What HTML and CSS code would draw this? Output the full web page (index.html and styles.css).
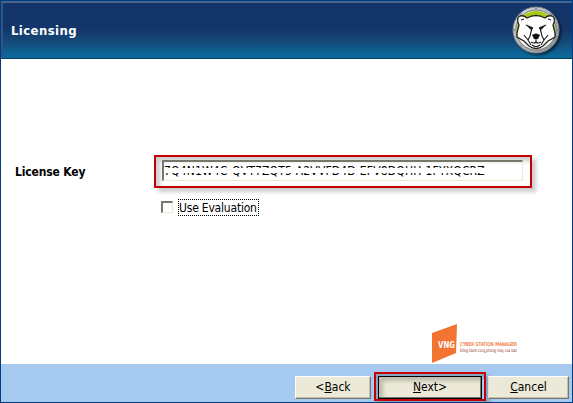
FILE: index.html
```html
<!DOCTYPE html>
<html lang="en">
<head>
<meta charset="utf-8">
<title>Licensing</title>
<link rel="stylesheet" href="styles.css">
</head>
<body>
<div class="window">
  <header class="header">
    <h1 class="title">Licensing</h1>
    <svg class="bear" width="50" height="50" viewBox="0 0 50 50">
      <defs><linearGradient id="ring" x1="0" y1="0" x2="1" y2="1"><stop offset="0" stop-color="#e0e1e4"/><stop offset=".5" stop-color="#b3b5b9"/><stop offset="1" stop-color="#85898e"/></linearGradient></defs>
      <circle cx="25" cy="24" r="23" fill="url(#ring)" stroke="#858b93"/>
      <circle cx="25" cy="24" r="20" fill="#eceeed" stroke="#777c70"/>
      <path d="M6 29A19.500 19.500 0 1 1 44 29Z" fill="#a9c916"/>
      <path d="M9 10C6 11 6 16 8 19L6 27V31L13 35L18 40Q25 45 32 40L37 35L44 31V27L42 19C44 16 44 11 41 10Q37 9 34 12Q25 7 16 12Q13 9 9 10Z" fill="#fff" stroke="#24261e" stroke-width="1.300"/>
      <path d="M15 19L22 22M35 19L28 22M21 22L19 30L17 34M29 22L31 30L33 34M13 29L17 34L20 39M37 29L33 34L30 39M10 14L13 13M40 14L37 13M25 33V36M20 36Q23 38 25 36Q27 38 30 36M21 39Q25 42 29 39" fill="none" stroke="#171717" stroke-width="1.100"/>
      <path d="M21 29Q25 26 29 29L27 33H23Z" fill="#111"/>
      <path d="M16 20L22 22L20 24ZM34 20L28 22L30 24Z" fill="#111"/>
      <g fill="#71767d"><circle cx="25" cy="2.500" r=".8"/><circle cx="10" cy="8" r=".8"/><circle cx="40" cy="8" r=".8"/><circle cx="3.500" cy="24" r=".8"/><circle cx="46.500" cy="24" r=".8"/><circle cx="10" cy="40" r=".8"/><circle cx="40" cy="40" r=".8"/></g>
    </svg>
  </header>
  <main class="content">
    <div class="label">License Key</div>
    <div class="fields">
      <div class="callout key-callout"><div class="key"><span>7Q4N1W4C-QVT7ZQT5-A2VVFD4D-EFV8DQHH-1FYXQCRZ</span></div></div>
      <div class="check"><i class="box"></i><span class="check-label">Use Evaluation</span></div>
    </div>
  </main>
  <div class="brand">
    <svg width="96" height="42" viewBox="0 0 96 42">
      <path d="M1 9L26 0L25 29L1 39Z" fill="#f37330"/>
      <text class="vng" x="7" y="23.500" textLength="17" lengthAdjust="spacingAndGlyphs">VNG</text>
      <text class="brand-name" x="29" y="21.500" textLength="57" lengthAdjust="spacingAndGlyphs">CYBER STATION MANAGER</text>
      <text class="slogan" x="29" y="28" textLength="57" lengthAdjust="spacingAndGlyphs">Đồng hành cùng phòng máy của bạn</text>
    </svg>
  </div>
  <footer class="footer">
    <div class="btn"><span>&lt;<u>B</u>ack</span></div>
    <div class="callout next-callout"><div class="btn default"><span><u>N</u>ext&gt;</span></div></div>
    <div class="btn cancel"><span><u>C</u>ancel</span></div>
  </footer>
</div>
</body>
</html>
```
FILE: styles.css
```css
* { box-sizing: border-box; }
body { margin: 0; font: 12px/16px "DejaVu Sans Condensed", "DejaVu Sans", sans-serif; color: #000; }
.window { position: relative; width: 573px; height: 403px; background: #fff; border: 1px solid #003c80; display: flex; flex-direction: column; }
.header { height: 58px; flex: none; display: flex; justify-content: space-between; padding: 4px 11px 0 10px; background: linear-gradient(#143569 0, #143569 45%, #154675 67%, #0c6899 95%); border-top: 2px solid #49648e; border-left: 2px solid #315386; border-bottom: 1px solid #073e5d; }
.title { margin: 15px 0 0 -2px; font-size: 13px; line-height: 18px; color: #fff; letter-spacing: .4px; }
.bear { margin-top: -1px; filter: drop-shadow(2px 2px 1px #0008); }
.content { flex: 1; display: flex; padding: 96px 40px 0 14px; }
.label { width: 139px; flex: none; padding-top: 9px; font-weight: bold; letter-spacing: -.15px; }
.callout { border: 2px solid #c40007; box-shadow: 4px 4px 4px #0003, inset 4px 4px 4px #0003; }
.key-callout { width: 378px; height: 33px; padding: 3px 7px 5px 6px; }
.key { position: relative; height: 21px; border: 1px solid #ece9d8; border-top: 2px solid #77766b; border-left: 2px solid #77766b; overflow: hidden; white-space: nowrap; }
.key span { display: block; margin: 1px 0 0; letter-spacing: .16px; }
.key::after { content: ""; position: absolute; left: 0; right: 0; top: 6px; height: 5px; background: #fff; }
.check { display: flex; margin: 11px 0 0 7px; gap: 5px; align-items: center; }
.box { width: 12px; height: 12px; border: 1px solid #ece9d8; border-top: 2px solid #77766b; border-left: 2px solid #77766b; margin-top: -1px; }
.check-label { width: 81px; height: 17px; border: 1px dotted #000; line-height: 16px; white-space: nowrap; letter-spacing: -.2px; }
.brand { position: absolute; left: 430px; top: 323px; height: 42px; }
.brand svg { display: block; }
.vng { font: bold 9px "DejaVu Sans", sans-serif; fill: #fff; }
.brand-name { font: 5px "DejaVu Sans", sans-serif; fill: #f37330; stroke: #f37330; stroke-width: .15px; }
.slogan { font: 4.5px "DejaVu Sans", sans-serif; fill: #8a2d29; }
.footer { height: 38px; flex: none; display: flex; justify-content: flex-end; align-items: flex-start; padding: 8px 3px 0 0; background: #a6c9ef; }
.btn { width: 76px; height: 23px; margin-top: 4px; background: #ece9d8; border: 1px solid; border-color: #fff #77766b #77766b #fff; box-shadow: inset -1px -1px #c3bfae; text-align: center; line-height: 20px; }
.next-callout { width: 112px; height: 29px; padding: 2px; margin: 0 2px 0 3px; }
.btn.default { width: auto; height: 23px; margin: 0; border: 1px solid #000; box-shadow: inset -1px -1px #77766b, inset 4px 4px 4px #0003; }
.btn.cancel { width: 81px; border-left-color: #d9dce0; }
u { text-underline-offset: 1px; }
```
